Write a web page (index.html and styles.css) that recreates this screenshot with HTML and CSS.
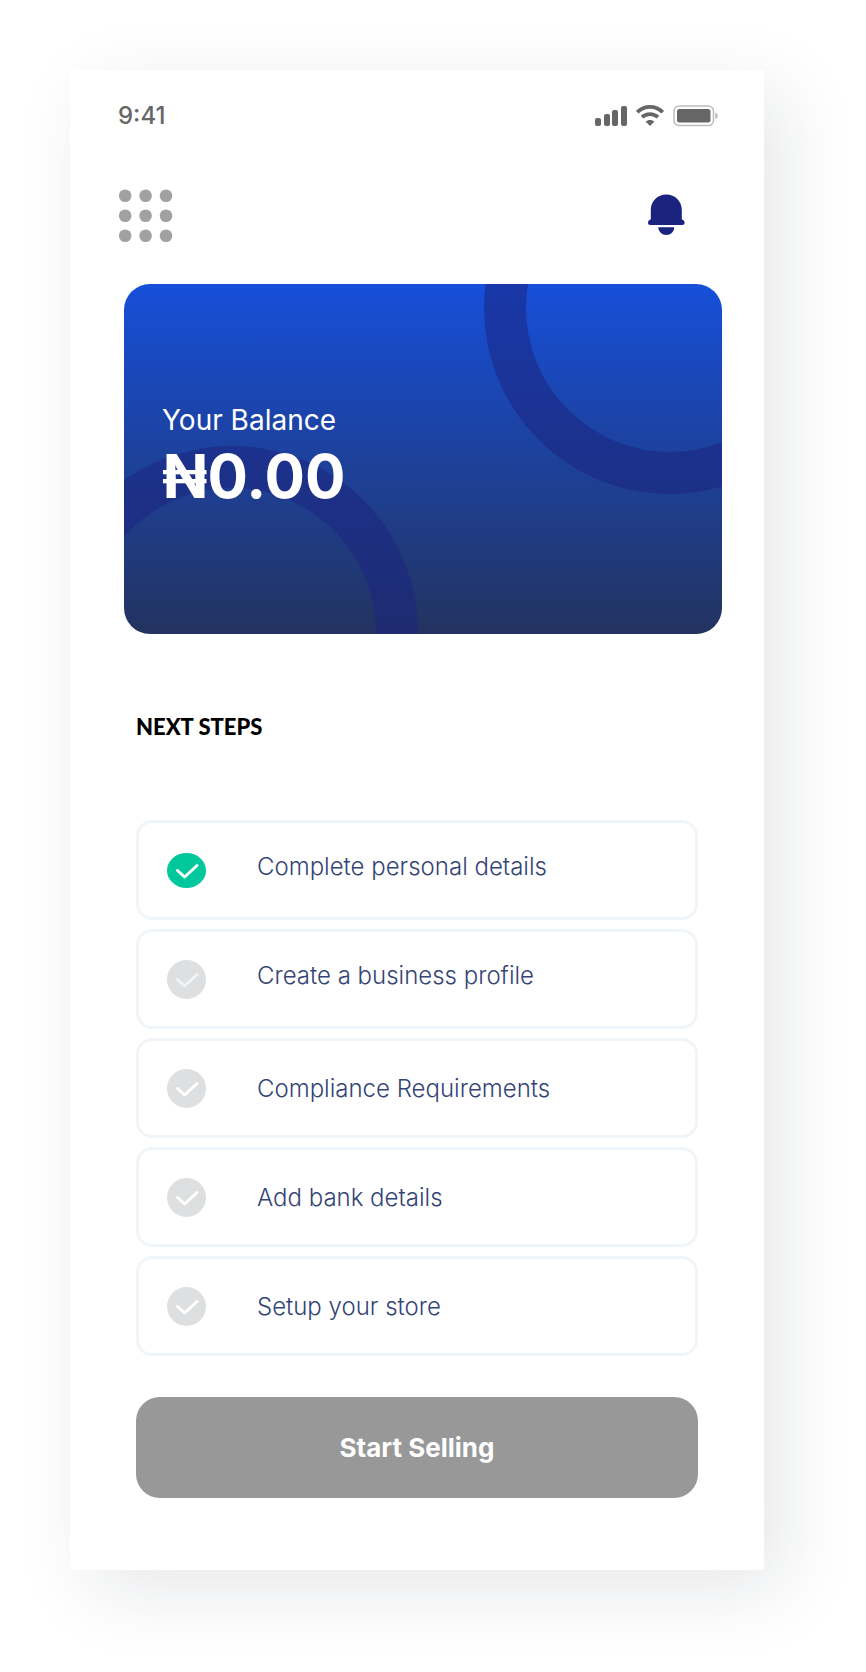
FILE: index.html
```html
<!DOCTYPE html>
<html lang="en">
<head>
<meta charset="utf-8">
<meta name="viewport" content="width=device-width, initial-scale=1">
<title>Balance</title>
<link rel="stylesheet" href="styles.css">
</head>
<body>
<main class="phone">
  <div class="status">
    <time class="status-time">9:41</time>
    <div class="status-icons">
      <svg width="32" height="22" viewBox="0 0 32 22" fill="#666" aria-hidden="true">
        <rect x="0" y="13" width="6" height="8" rx="2"/>
        <rect x="9" y="9" width="6" height="12" rx="2"/>
        <rect x="17" y="5" width="6" height="16" rx="2"/>
        <rect x="26" y="1" width="6" height="20" rx="2"/>
      </svg>
      <svg width="28" height="22" viewBox="0 0 28 22" aria-hidden="true">
        <path d="M1.300 7.200C8.400 .2 19.600 .2 26.700 7.200" fill="none" stroke="#666" stroke-width="3.800"/>
        <path d="M6 12.200C10.500 8 17.500 8 22 12.200" fill="none" stroke="#666" stroke-width="3.800"/>
        <path d="M9.600 16.600C12.200 14.500 15.800 14.500 18.400 16.600L14 21Z" fill="#666"/>
      </svg>
      <svg width="46" height="22" viewBox="0 0 46 22" aria-hidden="true">
        <rect x="1" y="1" width="39.500" height="19.500" rx="5" fill="none" stroke="#bdbdbd" stroke-width="1.500"/>
        <rect x="4" y="4" width="33.500" height="13.500" rx="2.500" fill="#666"/>
        <path d="M42.300 7.500C45.600 8.600 45.600 13 42.300 14Z" fill="#bdbdbd"/>
      </svg>
    </div>
  </div>

  <header class="toolbar">
    <button class="icon-button" type="button" aria-label="Menu">
      <svg width="54" height="54" viewBox="0 0 54 54" fill="#a1a1a1">
        <circle cx="6.200" cy="7.700" r="6.300"/><circle cx="26.600" cy="7.700" r="6.300"/><circle cx="47" cy="7.700" r="6.300"/>
        <circle cx="6.200" cy="27.700" r="6.300"/><circle cx="26.600" cy="27.700" r="6.300"/><circle cx="47" cy="27.700" r="6.300"/>
        <circle cx="6.200" cy="47.700" r="6.300"/><circle cx="26.600" cy="47.700" r="6.300"/><circle cx="47" cy="47.700" r="6.300"/>
      </svg>
    </button>
    <button class="icon-button" type="button" aria-label="Notifications">
      <svg width="37" height="42" viewBox="0 0 37 42" fill="#1a237e">
        <path d="M18.300 .5C9.500 .5 2.800 7.200 2.800 16V25.300C.9 26.200 0 27.500 0 28.800C0 30.200 .9 31 2.300 31H34.300C35.700 31 36.600 30.200 36.600 28.800C36.600 27.500 35.700 26.200 33.800 25.300V16C33.800 7.200 27.100 .5 18.300 .5Z"/>
        <path d="M10.300 33.300H26.200C26 38 22.700 41 18.300 41C13.900 41 10.600 38 10.300 33.300Z"/>
      </svg>
    </button>
  </header>

  <section class="card" aria-label="Balance">
    <span class="ring ring-top"></span>
    <span class="ring ring-bottom"></span>
    <p class="card-label">Your Balance</p>
    <p class="card-amount">₦0.00</p>
  </section>

  <section class="next">
    <h2 class="next-title">NEXT STEPS</h2>
    <ul class="steps">
      <li><label class="step step-raised">
        <span class="mark"><input class="mark-box mark-oval" type="checkbox" checked><svg class="tick" viewBox="0 0 39 39"><path d="M10.500 19.500L17.600 26L30 14.500"/></svg></span>
        <span class="step-text">Complete personal details</span>
      </label></li>
      <li><label class="step step-raised">
        <span class="mark"><input class="mark-box" type="checkbox"><svg class="tick tick-soft" viewBox="0 0 39 39"><path d="M10.500 19.500L17.600 26L30 14.500"/></svg></span>
        <span class="step-text">Create a business profile</span>
      </label></li>
      <li><label class="step">
        <span class="mark"><input class="mark-box" type="checkbox"><svg class="tick" viewBox="0 0 39 39"><path d="M10.500 19.500L17.600 26L30 14.500"/></svg></span>
        <span class="step-text">Compliance Requirements</span>
      </label></li>
      <li><label class="step">
        <span class="mark"><input class="mark-box" type="checkbox"><svg class="tick" viewBox="0 0 39 39"><path d="M10.500 19.500L17.600 26L30 14.500"/></svg></span>
        <span class="step-text">Add bank details</span>
      </label></li>
      <li><label class="step">
        <span class="mark"><input class="mark-box" type="checkbox"><svg class="tick" viewBox="0 0 39 39"><path d="M10.500 19.500L17.600 26L30 14.500"/></svg></span>
        <span class="step-text">Setup your store</span>
      </label></li>
    </ul>
    <button class="start" type="button">Start Selling</button>
  </section>
</main>
</body>
</html>
```
FILE: styles.css
```css
* {
  box-sizing: border-box;
}

body {
  margin: 0;
  padding: 70px 102px 102px 70px;
  background: #fff;
  font-family: Inter, "Liberation Sans", sans-serif;
}

.phone {
  padding: 32px 0 72px;
  background: #fff;
  box-shadow: 20px 20px 70px rgba(20, 30, 50, 0.1);
}

.status {
  display: flex;
  align-items: center;
  justify-content: space-between;
  padding: 0 45px 0 48px;
}

.status-time {
  color: #666;
  font-size: 24px;
  line-height: 28px;
  font-weight: 500;
}

.status-icons {
  display: flex;
  align-items: center;
  gap: 9px;
}

.toolbar {
  display: flex;
  align-items: center;
  justify-content: space-between;
  margin-top: 58px;
  padding: 0 79px 0 49px;
}

.icon-button {
  display: flex;
  padding: 0;
  border: 0;
  background: none;
}

.card {
  position: relative;
  overflow: hidden;
  height: 350px;
  margin: 42px 42px 0 54px;
  padding: 118px 38px 0;
  border-radius: 26px;
  background: linear-gradient(#174fda, #1d419b 50%, #233360);
  color: #fff;
}

.ring {
  position: absolute;
  width: 372px;
  height: 372px;
  border: 42px solid rgba(27, 36, 128, 0.55);
  border-radius: 50%;
}

.ring-top {
  top: -162px;
  right: -134px;
}

.ring-bottom {
  top: 162px;
  left: -78px;
}

.card-label,
.card-amount {
  position: relative;
  margin: 0;
}

.card-label {
  font-size: 28px;
  line-height: 36px;
}

.card-amount {
  margin-top: 6px;
  font-size: 60px;
  line-height: 64px;
  font-weight: 700;
}

.next {
  padding: 0 66px;
}

.next-title {
  margin: 77px 0 0;
  color: #000;
  font-family: Lato, sans-serif;
  font-size: 22px;
  line-height: 32px;
  font-weight: 900;
}

.steps {
  display: flex;
  flex-direction: column;
  gap: 9px;
  margin: 77px 0 0;
  padding: 0;
  list-style: none;
}

.step {
  display: flex;
  align-items: center;
  gap: 51px;
  height: 100px;
  padding: 0 28px;
  border: 3px solid #f0f5fa;
  border-radius: 16px;
}

.mark {
  position: relative;
  display: flex;
  align-items: center;
  width: 39px;
  height: 39px;
}

.mark-box {
  appearance: none;
  width: 39px;
  height: 39px;
  margin: 0;
  border-radius: 50%;
  background: #dddfe1;
}

.mark-oval {
  height: 35px;
}

.mark-box:checked {
  background: #00c89c;
}

.tick {
  position: absolute;
  inset: 0;
  fill: none;
  stroke: #fff;
  stroke-width: 3;
  stroke-linecap: round;
  stroke-linejoin: round;
  pointer-events: none;
}

.tick-soft {
  stroke: #f2f3f4;
}

.step-text {
  padding-top: 2px;
  color: #344475;
  font-size: 24px;
  line-height: 32px;
  font-weight: 300;
}

.step-raised .step-text {
  padding: 0 0 6px;
}

.start {
  display: block;
  width: 100%;
  height: 101px;
  margin-top: 41px;
  padding: 0;
  border: 0;
  border-radius: 24px;
  background: #989898;
  color: #fff;
  font-family: Inter, sans-serif;
  font-size: 26px;
  line-height: 32px;
  font-weight: 700;
}
```
